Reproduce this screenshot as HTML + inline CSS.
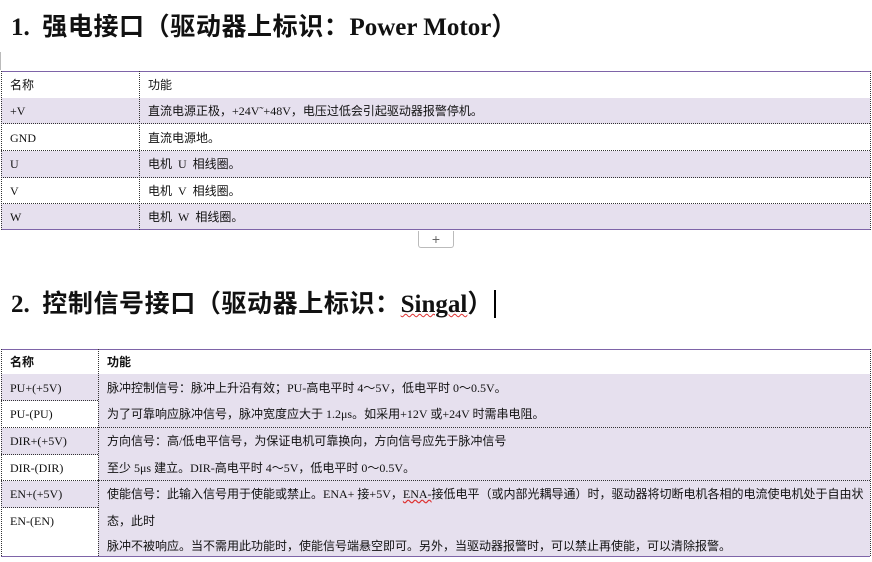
<!DOCTYPE html>
<html><head><meta charset="utf-8"><style>
body{margin:0;width:872px;height:562px;background:#fff;position:relative;overflow:hidden;font-family:"Liberation Serif","Noto Sans CJK SC",serif;color:#111}
.a{position:absolute}
h1{position:absolute;margin:0;font-size:25px;font-weight:bold;white-space:nowrap;line-height:28px;font-family:"Liberation Serif","Noto Sans CJK SC",serif}
h1 .k{letter-spacing:0.6px}
.r{position:absolute;left:1px;width:869px;border-bottom:1px dotted #333}
.c{position:absolute;font-size:12px;white-space:nowrap;line-height:14px}
.p{background:#e6e0ee}
.vl{position:absolute;border-left:1px dotted #333}
</style></head><body>
<h1 style="left:11px;top:14px">1.&nbsp;&nbsp;<span class="k">强电接口（驱动器上标识：</span>Power Motor）</h1>
<div class="a" style="left:0;top:52px;width:1px;height:18px;background:#bbb"></div>

<div class="r" style="top:71px;height:26px;border-top:1px solid #7e64a8;border-bottom:1px solid #7e64a8"></div>
<div class="r p" style="top:98px;height:25px"></div>
<div class="r" style="top:124px;height:26px"></div>
<div class="r p" style="top:151px;height:26px"></div>
<div class="r" style="top:178px;height:25px"></div>
<div class="r p" style="top:204px;height:25px;border-bottom:1px solid #7e64a8"></div>
<div class="vl" style="left:1px;top:71px;height:159px"></div>
<div class="vl" style="left:139px;top:71px;height:159px"></div>
<div class="vl" style="left:870px;top:71px;height:159px"></div>
<div class="c" style="left:10px;top:78px">名称</div><div class="c" style="left:148px;top:78px">功能</div>
<div class="c" style="left:10px;top:104px">+V</div><div class="c" style="left:148px;top:104px">直流电源正极，+24V˜+48V，电压过低会引起驱动器报警停机。</div>
<div class="c" style="left:10px;top:131px">GND</div><div class="c" style="left:148px;top:131px">直流电源地。</div>
<div class="c" style="left:10px;top:157px">U</div><div class="c" style="left:148px;top:157px">电机&nbsp; U&nbsp; 相线圈。</div>
<div class="c" style="left:10px;top:184px">V</div><div class="c" style="left:148px;top:184px">电机&nbsp; V&nbsp; 相线圈。</div>
<div class="c" style="left:10px;top:210px">W</div><div class="c" style="left:148px;top:210px">电机&nbsp; W&nbsp; 相线圈。</div>
<div class="a" style="left:418px;top:231px;width:34px;height:16px;border:1px solid #bbb;border-top:none;border-radius:0 0 3px 3px;text-align:center;font:14px 'Liberation Sans',sans-serif;line-height:16px;color:#666">+</div>

<h1 style="left:11px;top:291px">2.&nbsp;&nbsp;<span class="k">控制信号接口（驱动器上标识：</span><span style="text-decoration:underline wavy #d33;text-decoration-thickness:1px">Singal</span>）</h1>
<div class="a" style="left:494px;top:290px;width:2px;height:28px;background:#000"></div>

<div class="r" style="top:349px;height:24px;border-top:1px solid #7e64a8;border-bottom:1px solid #7e64a8"></div>
<div class="a p" style="left:98px;top:374px;width:772px;height:182px"></div>
<div class="a p" style="left:1px;top:374px;width:97px;height:26px;border-bottom:1px dotted #333"></div>
<div class="a" style="left:1px;top:401px;width:869px;height:26px;border-bottom:1px dotted #333"></div>
<div class="a p" style="left:1px;top:428px;width:97px;height:26px;border-bottom:1px dotted #333"></div>
<div class="a" style="left:1px;top:455px;width:869px;height:25px;border-bottom:1px dotted #333"></div>
<div class="a p" style="left:1px;top:481px;width:97px;height:26px;border-bottom:1px dotted #333"></div>
<div class="a" style="left:1px;top:556px;width:869px;border-top:1px solid #7e64a8"></div>
<div class="a p" style="left:98px;top:401px;width:772px;height:26px;border-bottom:1px dotted #333"></div>
<div class="a p" style="left:98px;top:455px;width:772px;height:25px;border-bottom:1px dotted #333"></div>
<div class="vl" style="left:1px;top:349px;height:207px"></div>
<div class="vl" style="left:98px;top:349px;height:207px"></div>
<div class="vl" style="left:870px;top:349px;height:207px"></div>
<div class="c" style="left:10px;top:355px;font-weight:bold">名称</div><div class="c" style="left:107px;top:355px;font-weight:bold">功能</div>
<div class="c" style="left:10px;top:381px">PU+(+5V)</div><div class="c" style="left:107px;top:381px">脉冲控制信号：脉冲上升沿有效；PU-高电平时 4～5V，低电平时 0～0.5V。</div>
<div class="c" style="left:10px;top:407px">PU-(PU)</div><div class="c" style="left:107px;top:407px">为了可靠响应脉冲信号，脉冲宽度应大于 1.2μs。如采用+12V 或+24V 时需串电阻。</div>
<div class="c" style="left:10px;top:434px">DIR+(+5V)</div><div class="c" style="left:107px;top:434px">方向信号：高/低电平信号，为保证电机可靠换向，方向信号应先于脉冲信号</div>
<div class="c" style="left:10px;top:461px">DIR-(DIR)</div><div class="c" style="left:107px;top:461px">至少 5μs 建立。DIR-高电平时 4～5V，低电平时 0～0.5V。</div>
<div class="c" style="left:10px;top:487px">EN+(+5V)</div><div class="c" style="left:107px;top:487px">使能信号：此输入信号用于使能或禁止。ENA+ 接+5V，<span style="text-decoration:underline wavy #d33">ENA-</span>接低电平（或内部光耦导通）时，驱动器将切断电机各相的电流使电机处于自由状</div>
<div class="c" style="left:10px;top:514px">EN-(EN)</div><div class="c" style="left:107px;top:514px">态，此时</div>
<div class="c" style="left:107px;top:539px">脉冲不被响应。当不需用此功能时，使能信号端悬空即可。另外，当驱动器报警时，可以禁止再使能，可以清除报警。</div>
</body></html>
